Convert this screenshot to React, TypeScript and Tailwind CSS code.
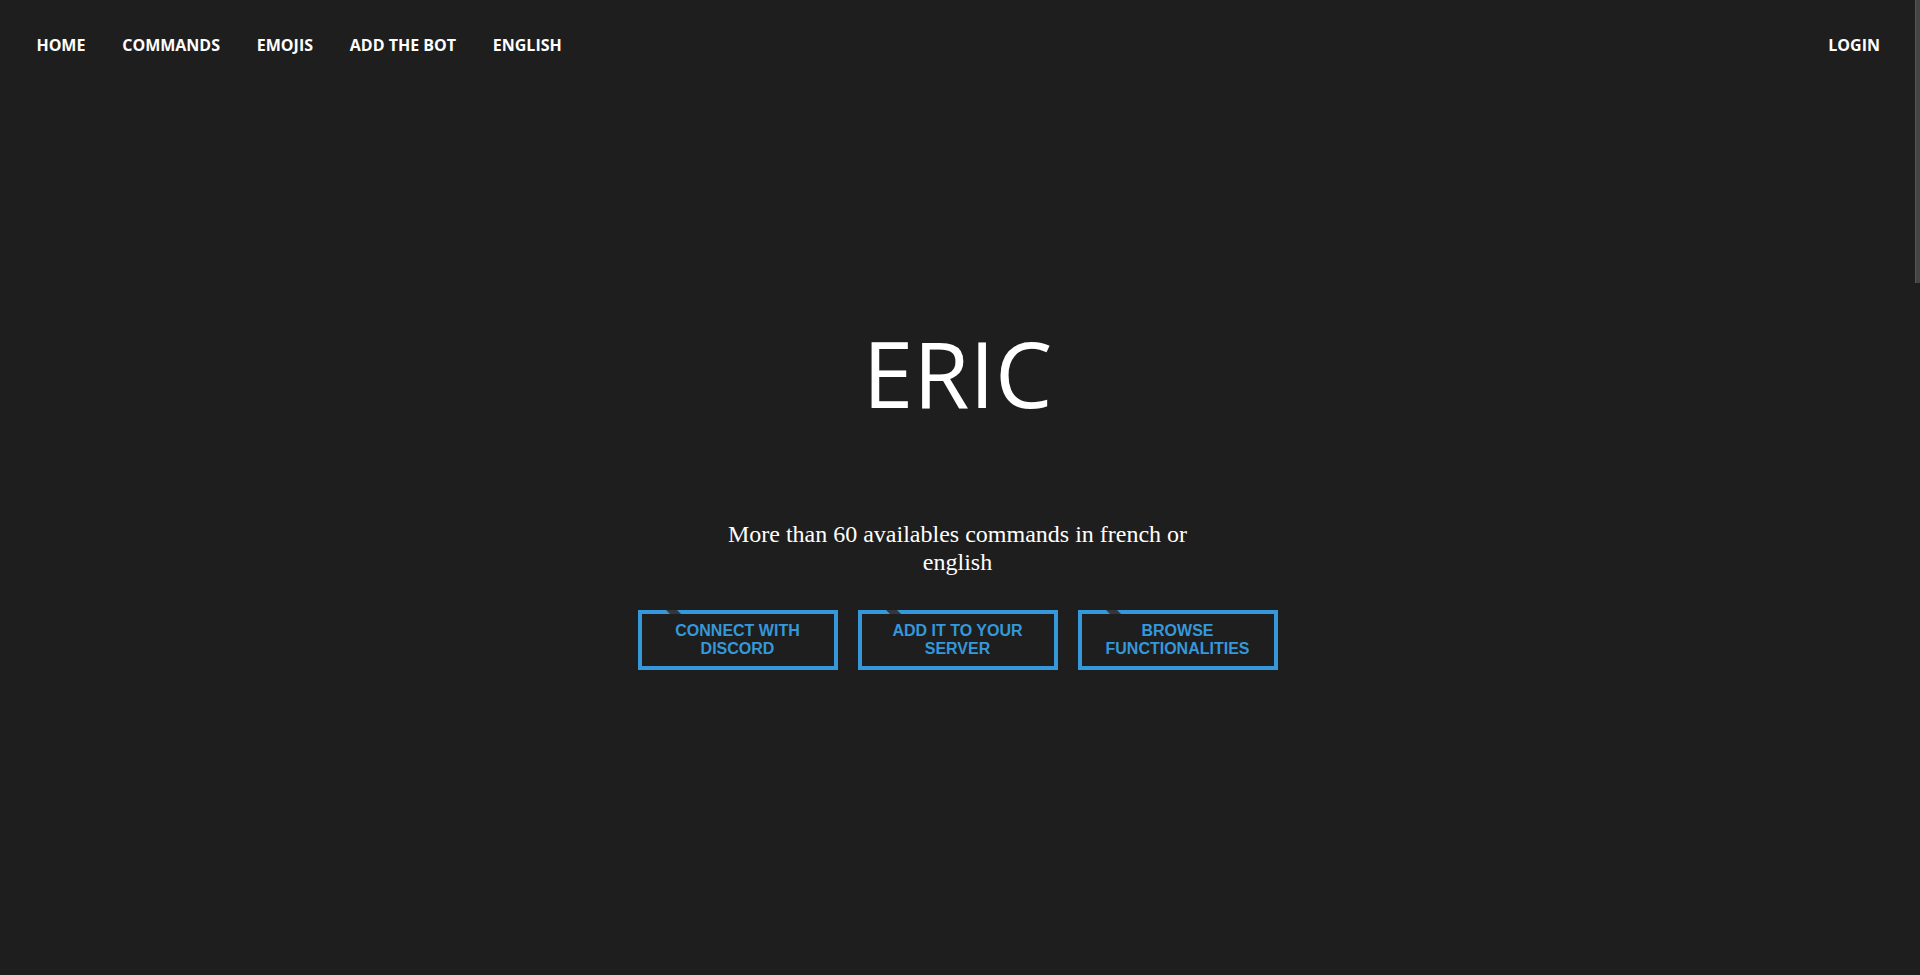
import React from "react";

const navLinks = ["Home", "Commands", "Emojis", "Add the bot", "English"];
const buttons = ["Connect with Discord", "Add it to your server", "Browse functionalities"];

export default function App() {
  return (
    <div className="flex h-screen overflow-hidden bg-[#1e1e1e]">
      <div className="flex-1 text-white">
        <nav className="h-[90px] flex items-center justify-between pl-[18px] pr-[16px] font-['Open_Sans',sans-serif] text-[16px] font-bold uppercase">
          <ul className="flex items-center">
            {navLinks.map((l) => (
              <li key={l} className="px-[18.4px]">
                <a href="#" className="text-white">{l}</a>
              </li>
            ))}
          </ul>
          <a href="#" className="px-[19px] text-white">Login</a>
        </nav>

        <h1 className="mt-[238px] text-center font-['Open_Sans',sans-serif] text-[91px] font-normal leading-none text-white">
          ERIC
        </h1>

        <p className="mx-auto mt-[102px] w-[500px] text-center font-['Liberation_Serif',serif] text-[24px] leading-[27.6px] text-white">
          More than 60 availables commands in french or english
        </p>

        <div className="mt-[34px] flex justify-center gap-5">
          {buttons.map((b) => (
            <a
              key={b}
              href="#"
              className="relative flex h-[60px] w-[200px] items-center justify-center border-4 border-[#3498db] px-2 text-center font-['Liberation_Sans',Arial,sans-serif] text-[16px] font-bold uppercase leading-[18px] text-[#3498db]"
            >
              <span className="absolute top-[-4px] left-[26px] h-[4px] w-[11px] skew-x-[45deg] bg-[#33363f]" />
              {b}
            </a>
          ))}
        </div>
      </div>
      <div className="w-[5px] shrink-0 bg-[#1e1e1e]">
        <div className="h-[283px] w-full border-l border-[#555] bg-[#444]" />
      </div>
    </div>
  );
}
